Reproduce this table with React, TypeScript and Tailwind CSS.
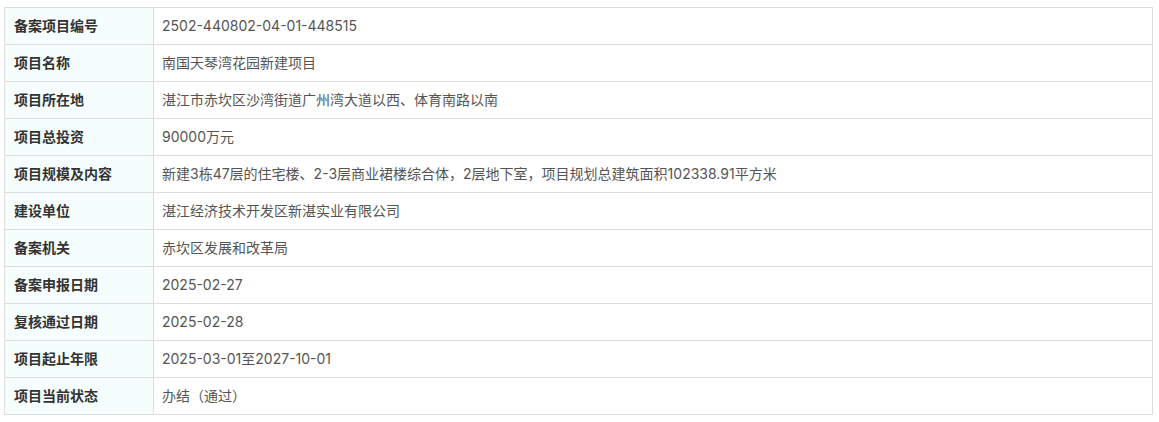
const rows: [string, string][] = [
  ["备案项目编号", "2502-440802-04-01-448515"],
  ["项目名称", "南国天琴湾花园新建项目"],
  ["项目所在地", "湛江市赤坎区沙湾街道广州湾大道以西、体育南路以南"],
  ["项目总投资", "90000万元"],
  ["项目规模及内容", "新建3栋47层的住宅楼、2-3层商业裙楼综合体，2层地下室，项目规划总建筑面积102338.91平方米"],
  ["建设单位", "湛江经济技术开发区新湛实业有限公司"],
  ["备案机关", "赤坎区发展和改革局"],
  ["备案申报日期", "2025-02-27"],
  ["复核通过日期", "2025-02-28"],
  ["项目起止年限", "2025-03-01至2027-10-01"],
  ["项目当前状态", "办结（通过）"],
];

export default function App() {
  return (
    <main className="min-h-screen bg-white pt-[7px] pl-[4px] pr-[6px] font-['Inter','Noto_Sans_CJK_SC',sans-serif]">
      <table className="w-[1149px] border-collapse text-[14px]">
        <tbody>
          {rows.map(([label, value]) => (
            <tr key={label} className="h-[37px]">
              <td className="w-[149px] border border-[#dddddd] bg-[#f5fdfd] pb-[2px] pl-[9px] font-bold text-[#333333]">
                {label}
              </td>
              <td className="border border-[#dddddd] pb-[2px] pl-[8px] text-[#555555]">{value}</td>
            </tr>
          ))}
        </tbody>
      </table>
    </main>
  );
}
